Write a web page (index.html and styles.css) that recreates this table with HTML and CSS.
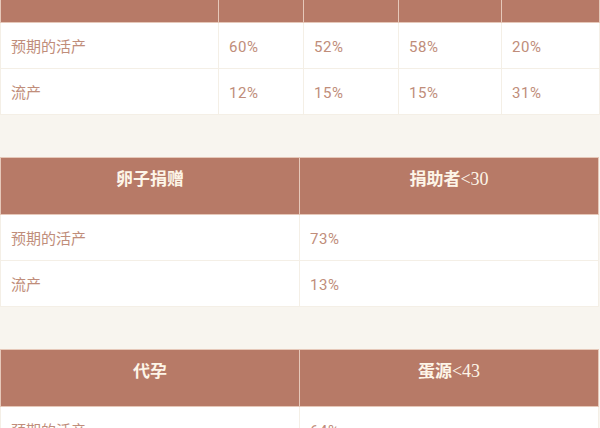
FILE: index.html
```html
<!DOCTYPE html>
<html lang="zh-CN">
<head>
<meta charset="utf-8">
<title>成功率</title>
<link rel="stylesheet" href="styles.css">
</head>
<body>
<div class="page">
  <table class="rates rates-five first">
    <colgroup>
      <col class="c-label"><col class="c-a"><col class="c-b"><col class="c-c"><col class="c-d">
    </colgroup>
    <thead>
      <tr><th>试管婴儿</th><th>&lt;35</th><th>35-37</th><th>38-40</th><th>&gt;40</th></tr>
    </thead>
    <tbody>
      <tr><td>预期的活产</td><td class="num">60%</td><td class="num">52%</td><td class="num">58%</td><td class="num">20%</td></tr>
      <tr><td>流产</td><td class="num">12%</td><td class="num">15%</td><td class="num">15%</td><td class="num">31%</td></tr>
    </tbody>
  </table>

  <table class="rates rates-two">
    <thead>
      <tr><th>卵子捐赠</th><th>捐助者<span class="lat">&lt;30</span></th></tr>
    </thead>
    <tbody>
      <tr><td>预期的活产</td><td class="num">73%</td></tr>
      <tr><td>流产</td><td class="num">13%</td></tr>
    </tbody>
  </table>

  <table class="rates rates-two">
    <thead>
      <tr><th>代孕</th><th>蛋源<span class="lat">&lt;43</span></th></tr>
    </thead>
    <tbody>
      <tr><td>预期的活产</td><td class="num">64%</td></tr>
      <tr><td>流产</td><td class="num">10%</td></tr>
    </tbody>
  </table>
</div>
</body>
</html>
```

FILE: styles.css
```css
html, body {
  margin: 0;
  padding: 0;
  background: #f8f5ef;
}

.page {
  width: 600px;
  overflow: hidden;
}

.rates {
  width: 599px;
  border-collapse: collapse;
  table-layout: fixed;
  background: #ffffff;
  margin-top: 42px;
}

.rates.first {
  margin-top: -34px;
}

.rates th {
  background: #b77a67;
  color: #fdf5e8;
  font-family: "Liberation Serif", "Noto Sans CJK SC", serif;
  font-weight: 700;
  font-size: 17px;
  line-height: 22px;
  padding: 10px 10px 23px;
  text-align: center;
  border: 1px solid #e6c8b9;
}

.rates th .lat {
  font-weight: 400;
  font-size: 18px;
}

.rates td {
  font-family: Roboto, "Noto Sans CJK SC", sans-serif;
  font-size: 15px;
  line-height: 20px;
  color: #c08d7a;
  padding: 14px 10px 11px;
  border: 1px solid #f4efe6;
  text-align: left;
}

.rates td.num {
  letter-spacing: 0.6px;
}

.rates-five .c-label { width: 218px; }
.rates-five .c-a { width: 85px; }
.rates-five .c-b { width: 95px; }
.rates-five .c-c { width: 103px; }
.rates-five .c-d { width: 98px; }

.rates-two th, .rates-two td {
  width: 50%;
}
```
